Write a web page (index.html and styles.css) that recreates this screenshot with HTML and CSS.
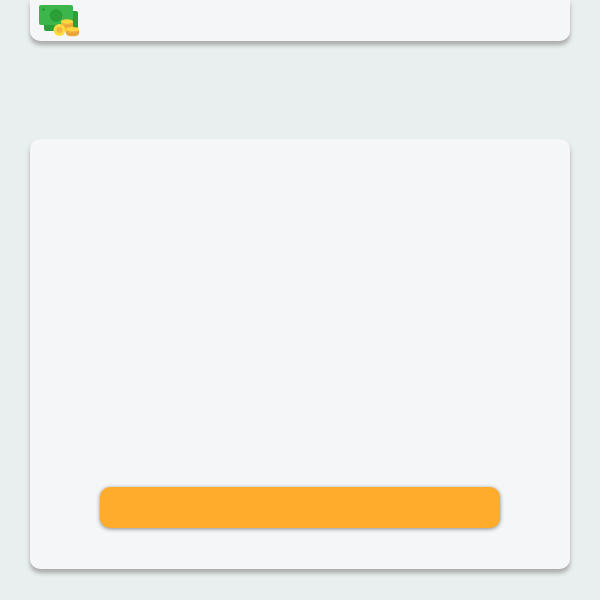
FILE: index.html
```html
<!DOCTYPE html>
<html lang="en">
<head>
<meta charset="utf-8">
<meta name="viewport" content="width=device-width, initial-scale=1">
<title>Money</title>
<link rel="stylesheet" href="styles.css">
</head>
<body>
<header class="panel header">
  <svg class="logo" viewBox="0 0 40 32" aria-hidden="true">
    <rect x="5" y="6" width="34" height="20" rx="2" fill="#2a9f37"/>
    <rect x="0" y="0" width="34" height="20" rx="2" fill="#3cb54a"/>
    <circle cx="17" cy="10.500" r="6.300" fill="#2a9f37"/>
    <circle cx="4.500" cy="4.500" r="1.600" fill="#2a9f37"/>
    <path d="M22 16v8c0 3.400 12 3.400 12 0v-8z" fill="#f0b040"/>
    <path d="M22 19c1 3 11 3 12 0" fill="none" stroke="#e3a038" stroke-width="1"/>
    <ellipse cx="28" cy="16.500" rx="6" ry="2.200" fill="#ffd93b"/>
    <path d="M27 24v4.500c0 3.800 13 3.800 13 0v-4.500z" fill="#eeab3e"/>
    <path d="M27 27c1 3 12 3 13 0" fill="none" stroke="#e09b38" stroke-width="1"/>
    <ellipse cx="33.500" cy="24.200" rx="6.500" ry="2.300" fill="#ffd93b"/>
    <circle cx="20.500" cy="25" r="6" fill="#ffdc3e"/>
    <circle cx="20.500" cy="25" r="3" fill="#f0b545"/>
  </svg>
</header>
<main class="panel card">
  <button class="action" type="button" aria-label="Continue"></button>
</main>
</body>
</html>
```
FILE: styles.css
```css
* {
  box-sizing: border-box;
}

body {
  margin: 0;
  min-height: 100vh;
  background: #e8efee;
  font-family: "Liberation Sans", sans-serif;
}

.panel {
  width: 90%;
  margin: 0 auto;
  background: #f4f6f8;
  box-shadow: 0 4px 4px #aaa;
}

.header {
  padding: 5px 9px 4px;
  border-radius: 0 0 10px 10px;
}

.logo {
  display: block;
  width: 40px;
  height: 32px;
}

.card {
  display: flex;
  flex-direction: column;
  align-items: center;
  margin-top: 98px;
  padding: 348px 70px 41px;
  border-radius: 10px;
}

.action {
  width: 100%;
  height: 41px;
  border: 0;
  border-radius: 10px;
  background: #ffac2c;
  box-shadow: 0 1px 4px #888;
  cursor: pointer;
}
```
